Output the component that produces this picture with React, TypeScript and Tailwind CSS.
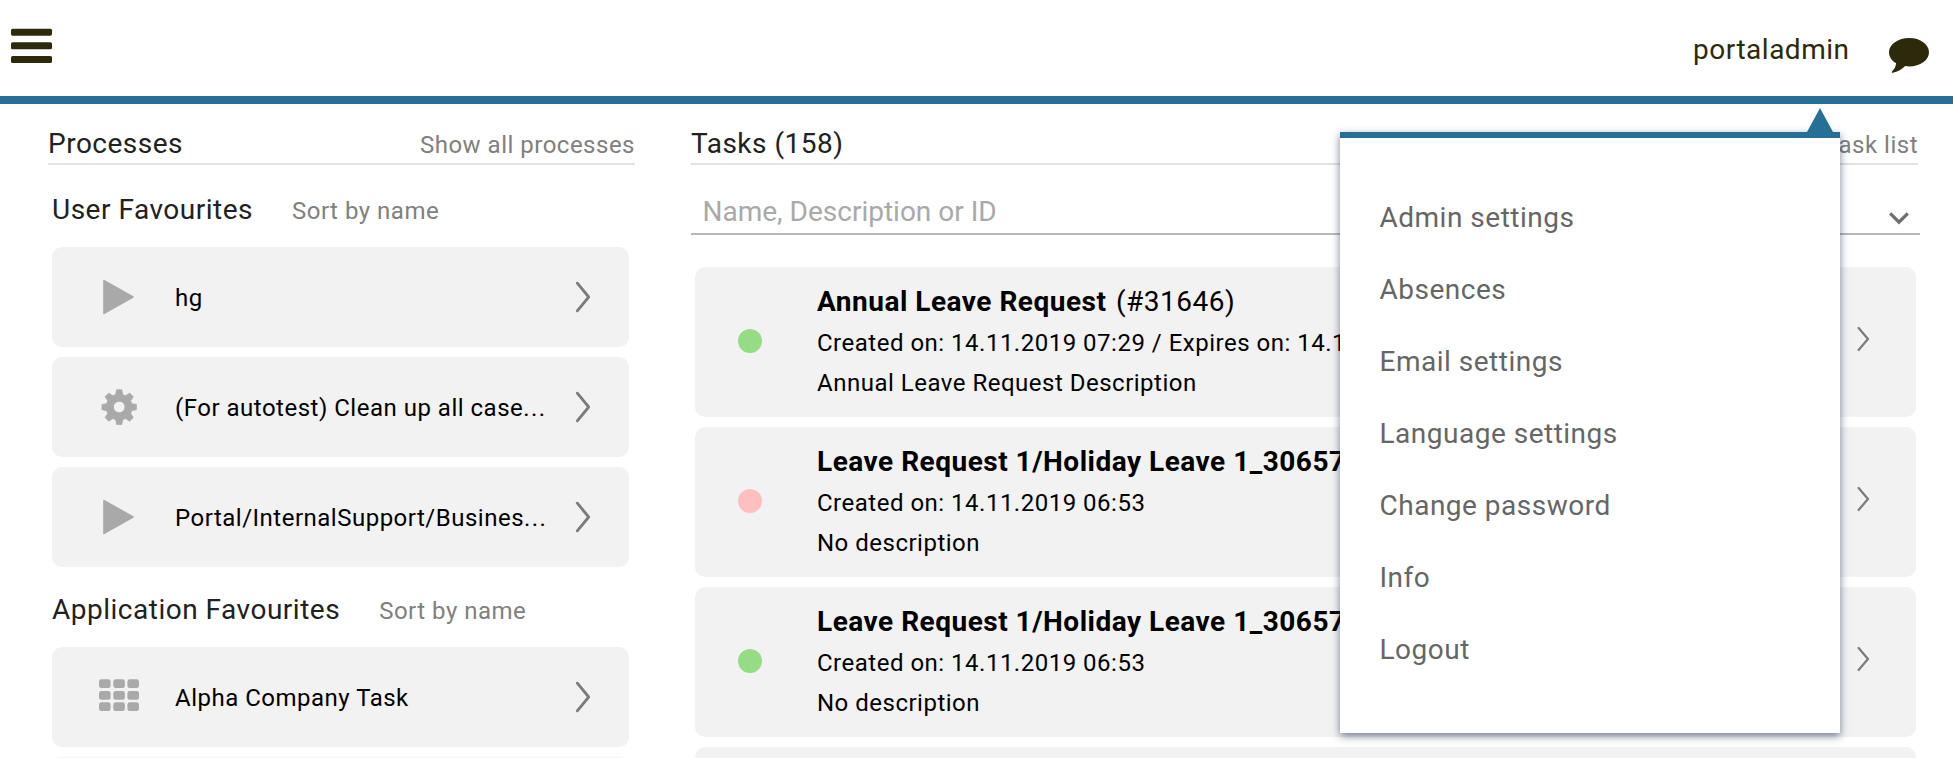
import React from "react";

type ProcessIcon = "play" | "gear" | "grid";

function Glyph({ name }: { name: ProcessIcon }) {
  return (
    <svg width="48" height="48" viewBox="0 0 48 48" fill="#a9a9a9" className="shrink-0">
      {name === "play" && <path d="M8.2 7.6Q8.2 6.2 9.5 6.9L38.4 23.3Q39.4 24 38.4 24.7L9.5 41.1Q8.2 41.8 8.2 40.4Z" />}
      {name === "gear" && (
        <path
          fillRule="evenodd"
          d="M21.6 6.8h5.2l.9 4.8 2.9 1.2 4-2.7 3.7 3.7-2.7 4 1.2 2.9 4.6.8v5.2l-4.6.9-1.2 2.9 2.7 4-3.7 3.7-4-2.7-2.9 1.2-.9 4.7h-5.2l-.9-4.7-2.9-1.2-4 2.7-3.7-3.7 2.7-4-1.2-2.9-4.6-.9v-5.2l4.6-.8 1.2-2.9-2.7-4 3.7-3.7 4 2.7 2.9-1.2ZM24.2 18.2a5.8 5.8 0 1 0 0 11.6a5.8 5.8 0 1 0 0-11.6Z"
          stroke="#a9a9a9"
          strokeWidth="0.8"
          strokeLinejoin="round"
        />
      )}
      {name === "grid" &&
        [6.3, 18, 29.3].map((y) =>
          [4, 18.3, 32.4].map((x) => <rect key={`${x}-${y}`} x={x} y={y} width="11.6" height="8.8" rx="2.4" />),
        )}
    </svg>
  );
}

function ProcessCard({ icon, label, cut }: { icon: ProcessIcon; label: string; cut?: boolean }) {
  return (
    <div className="flex h-[100px] shrink-0 items-center rounded-[10px] bg-[#f2f2f2] pr-[38px] pl-[43px]">
      <Glyph name={icon} />
      <span className="ml-[32px] flex-1 pt-[2px] text-[24px] leading-[28px] whitespace-nowrap text-black">
        {label}
        {cut && <span className="tracking-[1.4px]">...</span>}
      </span>
      <svg width="18" height="34" viewBox="0 0 18 34" fill="none" stroke="#7b7b7b" strokeWidth="2.8" strokeLinecap="round" strokeLinejoin="round">
        <path d="M4.3 3.2L15.7 17L4.3 30.8" />
      </svg>
    </div>
  );
}

function GroupHeading({ title }: { title: string }) {
  return (
    <div className="flex h-[54px] shrink-0 items-baseline gap-[39px]">
      <h3 className="text-[28px] leading-[33px] text-[#212121]">{title}</h3>
      <a className="text-[24px] leading-[28px] text-[#808080]">Sort by name</a>
    </div>
  );
}

function ColumnTitle({ title, link }: { title: string; link: string }) {
  return (
    <div className="flex h-[38px] shrink-0 items-baseline justify-between border-b-2 border-[#e2e2e2]">
      <h2 className="text-[28px] leading-[33px] text-[#212121]">{title}</h2>
      <a className="text-[24px] leading-[28px] text-[#808080]">{link}</a>
    </div>
  );
}

interface Task {
  title: string;
  id?: string;
  dates: string;
  description: string;
  high?: boolean;
}

const tasks: Task[] = [
  {
    title: "Annual Leave Request",
    id: "(#31646)",
    dates: "Created on: 14.11.2019 07:29 / Expires on: 14.11.2019",
    description: "Annual Leave Request Description",
  },
  { title: "Leave Request 1/Holiday Leave 1_30657", dates: "Created on: 14.11.2019 06:53", description: "No description", high: true },
  { title: "Leave Request 1/Holiday Leave 1_30657", dates: "Created on: 14.11.2019 06:53", description: "No description" },
];

function TaskCard({ task }: { task: Task }) {
  return (
    <div className="flex h-[150px] shrink-0 items-start rounded-[10px] bg-[#f2f2f2] pr-[46px] pl-[43px] whitespace-nowrap text-black">
      <span className={task.high ? "mt-[62px] size-6 rounded-full bg-[#ffbfbf]" : "mt-[62px] size-6 rounded-full bg-[#95dc84]"} />
      <div className="ml-[55px] flex-1 pt-[18px]">
        <div className="text-[28px] leading-[33px]">
          <b className="font-bold">{task.title}</b>
          {task.id && <span className="ml-[2px]"> {task.id}</span>}
        </div>
        <div className="mt-[11px] text-[24px] leading-[28px]">{task.dates}</div>
        <div className="mt-[12px] text-[24px] leading-[28px]">{task.description}</div>
      </div>
      <svg className="mt-[58px]" width="14" height="28" viewBox="0 0 14 28" fill="none" stroke="#7b7b7b" strokeWidth="2.2" strokeLinecap="round" strokeLinejoin="round">
        <path d="M2.6 3L12 14L2.6 25" />
      </svg>
    </div>
  );
}

const menuItems = ["Admin settings", "Absences", "Email settings", "Language settings", "Change password", "Info", "Logout"];

function UserMenu() {
  return (
    <nav className="absolute top-[132px] left-[1340px] h-[601px] w-[500px] border-t-[6px] border-[#267096] bg-white shadow-[0_3px_8px_rgba(30,45,85,0.6)]">
      <svg className="absolute -top-[30px] left-[467px]" width="26" height="24" viewBox="0 0 26 24" fill="#267096">
        <path d="M13 0L26 24H0Z" />
      </svg>
      <ul className="flex flex-col gap-[39px] pt-[63px] pl-[39.5px] text-[28px] leading-[33px] text-[#666]">
        {menuItems.map((item) => (
          <li key={item}>{item}</li>
        ))}
      </ul>
    </nav>
  );
}

export default function App() {
  return (
    <div className="relative flex h-[758px] w-[1953px] flex-col overflow-hidden bg-white font-['Roboto',sans-serif] tracking-[0.5px]">
      <header className="flex h-[104px] shrink-0 items-start border-b-8 border-[#267096] pr-[23px] pl-[11px]">
        <svg className="mt-[28px]" width="42" height="36" viewBox="0 0 42 36" fill="#2d290b">
          <rect y="0.7" width="41" height="7" rx="1.6" />
          <rect y="14.3" width="41" height="7" rx="1.6" />
          <rect y="28" width="41" height="7" rx="1.6" />
        </svg>
        <span className="mt-[33px] ml-auto text-[28px] leading-[33px] text-[#2d290b]">portaladmin</span>
        <svg className="mt-[37px] ml-[38.5px]" width="42" height="38" viewBox="0 0 42 38" fill="#2d290b">
          <path d="M21.2 1C32.3 1 41 7.3 41 15.2S32.3 29.4 21.2 29.4C19.8 29.4 18.5 29.3 17.2 29.1C14 32.3 9.8 35.2 4.8 35.8C3.6 35.9 3.4 34.9 4.2 34.2C6.2 32.1 7.8 30.2 8.1 26.3C3.9 23.8 1 19.8 1 15.2C1 7.3 10.1 1 21.2 1Z" />
        </svg>
      </header>

      <main className="flex flex-1 items-start pt-[23px] pl-[48px]">
        <section className="flex w-[587px] shrink-0 flex-col">
          <ColumnTitle title="Processes" link="Show all processes" />
          <div className="mt-[28px] flex flex-col pr-[6px] pl-[4px]">
            <GroupHeading title="User Favourites" />
            <div className="flex flex-col gap-[10px]">
              <ProcessCard icon="play" label="hg" />
              <ProcessCard icon="gear" label="(For autotest) Clean up all case" cut />
              <ProcessCard icon="play" label="Portal/InternalSupport/Busines" cut />
            </div>
            <div className="mt-[26px] flex flex-col">
              <GroupHeading title="Application Favourites" />
              <div className="flex flex-col gap-[10px]">
                <ProcessCard icon="grid" label="Alpha Company Task" />
                <div className="h-[100px] rounded-[10px] bg-[#f2f2f2]" />
              </div>
            </div>
          </div>
        </section>

        <section className="ml-[56px] flex w-[1229px] shrink-0 flex-col">
          <div className="flex flex-col pr-[2px]">
            <ColumnTitle title="Tasks (158)" link="Show full task list" />
          </div>
          <div className="mt-[30px] flex h-[40px] items-start justify-between border-b-2 border-[#b8b8b8] pr-[10px] pl-[11.5px]">
            <span className="text-[28px] leading-[33px] tracking-normal text-[#a9a9a9]">Name, Description or ID</span>
            <svg className="mt-[15px]" width="22" height="16" viewBox="0 0 22 16" fill="none" stroke="#6e6e6e" strokeWidth="3.2">
              <path d="M2.2 3.4L11 12.2L19.8 3.4" />
            </svg>
          </div>
          <div className="mt-[32px] flex flex-col gap-[10px] pr-[4px] pl-[4px]">
            {tasks.map((task, i) => (
              <TaskCard key={i} task={task} />
            ))}
            <div className="h-[150px] rounded-[10px] bg-[#f2f2f2]" />
          </div>
        </section>
      </main>

      <UserMenu />
    </div>
  );
}
